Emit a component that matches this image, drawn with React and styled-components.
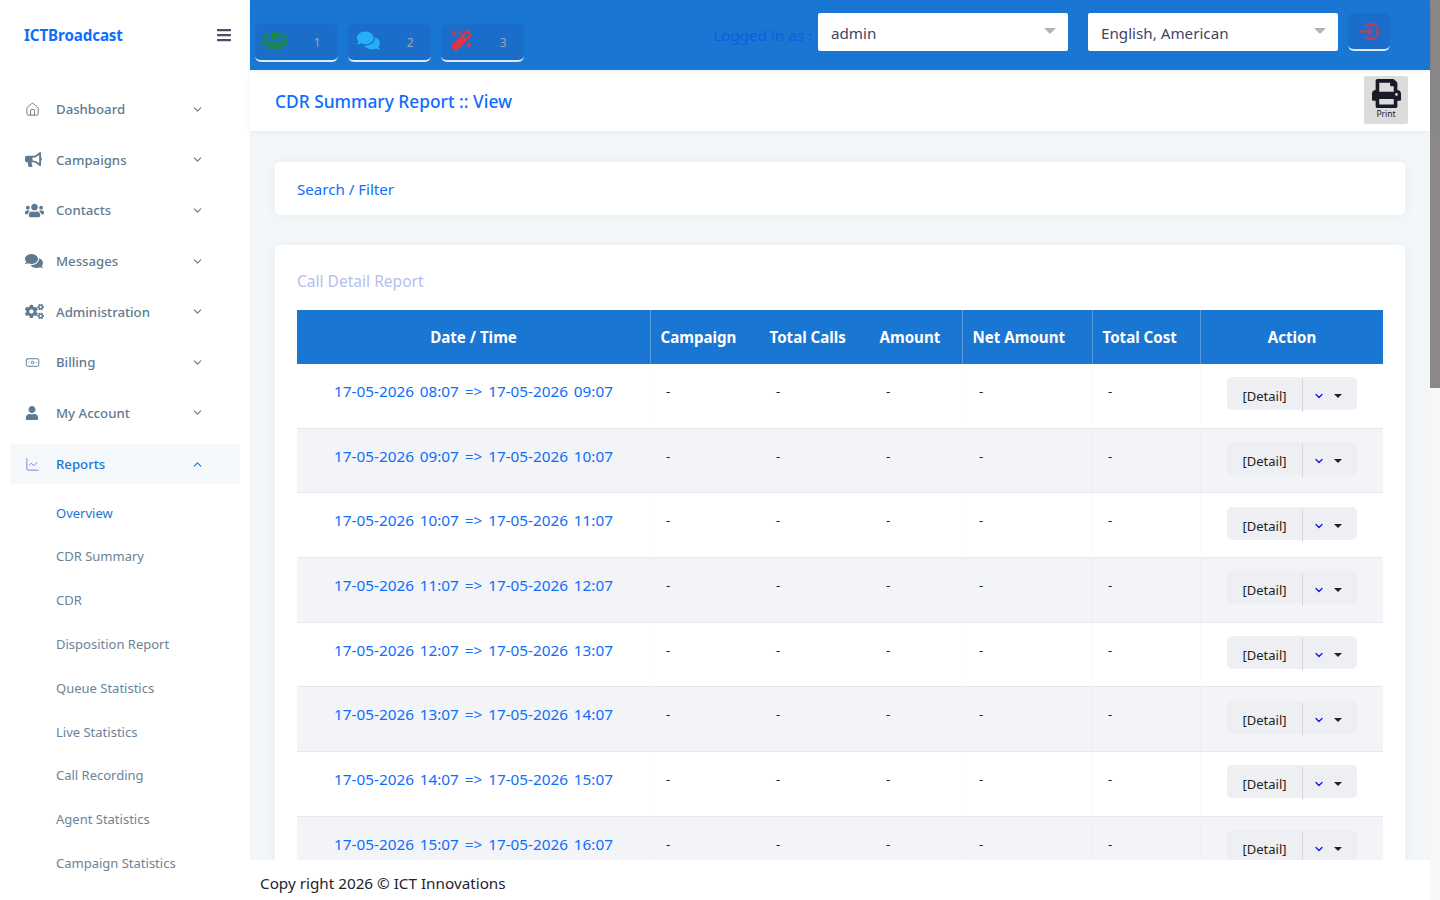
import React from 'react';
import styled, { createGlobalStyle } from 'styled-components';
import { FaBars, FaBullhorn, FaUsers, FaComments, FaCogs, FaUser, FaMagic, FaPrint } from 'react-icons/fa';
import { BiLogInCircle } from 'react-icons/bi';
import { Home, Banknote, LineChart, ChevronDown, ChevronUp } from 'lucide-react';

const Font = '"Noto Sans", "Open Sans", sans-serif';

const Global = createGlobalStyle`
  html, body { margin: 0; padding: 0; height: 100%; overflow: hidden; }
  body { font-family: ${Font}; background: #fff; }
  * { box-sizing: border-box; }
`;

const Page = styled.div`display: flex; width: 1440px; height: 900px; overflow: hidden;`;
const Sidebar = styled.aside`width: 250px; flex: none; background: #fff; padding: 0 10px; overflow: hidden;`;
const Brand = styled.div`display: flex; align-items: center; justify-content: space-between; height: 70px; padding: 0 8px 0 14px; color: #0d6efd; font-size: 15.15px; font-weight: 700; letter-spacing: -.1px; svg { color: #4a4f6a; font-size: 16px; }`;
const Nav = styled.nav`display: flex; flex-direction: column; gap: 10.05px; padding-top: 18.8px;`;
const NavItem = styled.div`display: flex; align-items: center; height: 40.6px; padding: 0 14px; border-radius: 4px; font-size: 13.2px; font-weight: 500; color: ${p => p.$active ? '#1976d2' : '#5f7a90'}; background: ${p => p.$active ? '#f4f8fb' : 'transparent'};`;
const NavIcon = styled.span`width: 32px; flex: none; display: flex; align-items: center; padding-left: 1px; color: ${p => p.$active ? '#7a6be0' : '#5f7a90'};`;
const NavLabel = styled.span`flex: 1;`;
const NavChevron = styled.span`display: flex; width: 18px; margin-right: 20px; justify-content: center;`;
const NavGroup = styled.div`margin-top: .5px;`;
const SubNav = styled.div`display: flex; flex-direction: column; padding-top: 7.3px;`;
const SubItem = styled.div`height: 43.8px; line-height: 43.8px; padding-left: 46px; font-size: 13px; color: ${p => p.$active ? '#1976d2' : '#6c8397'};`;

const Main = styled.div`flex: 1; min-width: 0; display: flex; flex-direction: column; background: #f3f7fa;`;
const Header = styled.header`height: 70px; flex: none; background: #1976d2; display: flex; align-items: center; padding: 0 40px 0 5px; box-shadow: 0 1px 4px rgba(0,0,0,.08); position: relative; z-index: 2;`;
const Quick = styled.div`display: flex; gap: 10px; margin-top: 16px;`;
const QuickBtn = styled.div`display: flex; width: 83px; height: 38px;`;
const QuickPart = styled.div`flex: 1; display: flex; align-items: center; justify-content: center; background: #1a6dc8; border-bottom: 2px solid #dfe9f5; color: #9aa7b8; font-size: 12px; padding-top: ${p => p.$num ? '1px' : '0'}; border-radius: ${p => p.$num ? '0 6px 6px 0' : '6px 0 0 6px'}; svg { color: ${p => p.$color}; font-size: ${p => p.$size || 21}px; margin-top: -4px; margin-left: -1px; }`;
const Right = styled.div`margin-left: auto; margin-top: -6px; display: flex; align-items: center;`;
const Logged = styled.span`font-size: 15.2px; color: #0d5fdc; margin-right: 6px; margin-top: 6px;`;
const Select = styled.div`width: 250px; height: 38px; margin-right: 20px; background: #fff; border-radius: 2px; display: flex; align-items: center; justify-content: space-between; padding: 1px 12px 0 13px; font-size: 15.2px; color: #3f4463;`;
const Caret = styled.span`width: 0; height: 0; border-left: 6px solid transparent; border-right: 6px solid transparent; border-top: 6px solid #adb5bd; margin-top: -4px;`;
const LogoutBtn = styled.div`width: 42px; height: 38px; margin-left: -10px; background: #1a6dc8; border-bottom: 2px solid #dfe9f5; border-radius: 6px; display: flex; align-items: center; justify-content: center; color: #dc3545; font-size: 23px;`;

const SubHeader = styled.div`height: 61px; flex: none; background: #fff; display: flex; align-items: center; justify-content: space-between; padding: 0 22px 0 25px; box-shadow: 0 1px 6px rgba(0,0,0,.06); position: relative; z-index: 1;`;
const PageTitle = styled.h1`margin: 0; font-size: 17.35px; font-weight: 500; color: #0d6efd;`;
const PrintBtn = styled.div`width: 44px; height: 48px; align-self: flex-start; margin-top: 6px; background: #dcdcdc; border-radius: 2px; display: flex; flex-direction: column; align-items: center; padding-top: 3px; color: #1a1a28; font-size: 8.5px; svg { font-size: 29px; margin-bottom: 0; }`;

const Content = styled.div`flex: 1; min-height: 0; overflow: hidden; padding: 31px 25px 0;`;
const Card = styled.section`background: #fff; border-radius: 5px; margin-bottom: 30px; padding: ${p => p.$pad}; box-shadow: 0 0 14px rgba(60,80,100,.06);`;
const SearchTitle = styled.div`font-size: 15.1px; height: 53px; line-height: 55px; color: #0d6efd;`;
const CardTitle = styled.div`font-size: 15.55px; line-height: 22px; color: #b3c0ea; margin-bottom: 18px;`;
const Table = styled.table`width: 1086px; table-layout: fixed; border-collapse: separate; border-spacing: 0;`;
const Th = styled.th`height: 54px; background: #1976d2; color: #fff; font-size: 15.1px; font-weight: 700; padding: 0 0 0 ${p => p.$left ? '9.5px' : '0'}; text-align: ${p => p.$left ? 'left' : 'center'}; border-left: ${p => p.$sep ? '1px solid rgba(255,255,255,.28)' : '0'}; white-space: nowrap;`;
const Tr = styled.tr`background: ${p => p.$even ? '#f2f4f8' : '#fff'};`;
const Td = styled.td`height: 64.67px; padding: 0 0 9.4px ${p => p.$pad || '0'}; border-bottom: 1px solid #e6e8ee; border-left: ${p => p.$sep ? '1px solid rgba(0,0,0,.018)' : '0'}; font-size: 13.2px; color: #222; text-align: ${p => p.$center ? 'center' : 'left'}; white-space: nowrap;`;
const DateLink = styled.span`font-size: 15.3px; word-spacing: 1.9px; color: #0d6efd;`;
const ActionCell = styled.td`height: 64.67px; padding: 0; border-bottom: 1px solid #e6e8ee; border-left: 1px solid rgba(0,0,0,.018);`;
const ActionGroup = styled.div`display: flex; width: 130px; height: 33px; margin: 0 0 4px 26px; border-radius: 5px; background: #eeeff3; font-size: 13px; color: #222;`;
const DetailBtn = styled.div`width: 75px; display: flex; align-items: center; justify-content: center; padding-top: 5px;`;
const Split = styled.span`width: 1px; height: 33px; flex: none; margin-top: 2px; background: #d6d7da;`;
const ToggleBtn = styled.div`flex: 1; display: flex; align-items: center; padding: 5px 0 0 10px; gap: 9px; color: #1414ee;`;
const ToggleCaret = styled.span`width: 0; height: 0; border-left: 4px solid transparent; border-right: 4px solid transparent; border-top: 4px solid #222;`;

const Footer = styled.footer`height: 40px; flex: none; background: #fff; padding: 6px 10px 0; display: flex; align-items: center; font-size: 15.25px; color: #1e2433; position: relative; z-index: 1;`;
const ScrollTrack = styled.div`width: 10px; flex: none; background: #f8f8f8;`;
const ScrollThumb = styled.div`height: 388px; background: #8a8889;`;

const navItems = [
  ['Dashboard', <Home size={15} strokeWidth={1.5} />],
  ['Campaigns', <FaBullhorn size={17} />],
  ['Contacts', <FaUsers size={19} />],
  ['Messages', <FaComments size={18} />],
  ['Administration', <FaCogs size={19} />],
  ['Billing', <Banknote size={15} strokeWidth={1.5} />],
  ['My Account', <FaUser size={14} />],
];
const subItems = ['Overview', 'CDR Summary', 'CDR', 'Disposition Report', 'Queue Statistics', 'Live Statistics', 'Call Recording', 'Agent Statistics', 'Campaign Statistics'];
const rows = ['08:07|09:07', '09:07|10:07', '10:07|11:07', '11:07|12:07', '12:07|13:07', '13:07|14:07', '14:07|15:07', '15:07|16:07'];

export default function App() {
  return (
    <Page>
      <Global />
      <Sidebar>
        <Brand>ICTBroadcast<FaBars /></Brand>
        <Nav>
          {navItems.map(([label, icon]) => (
            <NavItem key={label}>
              <NavIcon>{icon}</NavIcon>
              <NavLabel>{label}</NavLabel>
              <NavChevron><ChevronDown size={13} /></NavChevron>
            </NavItem>
          ))}
          <NavGroup>
            <NavItem $active>
              <NavIcon $active><LineChart size={15} strokeWidth={1.4} /></NavIcon>
              <NavLabel>Reports</NavLabel>
              <NavChevron><ChevronUp size={13} /></NavChevron>
            </NavItem>
            <SubNav>
              {subItems.map((s, i) => <SubItem key={s} $active={i === 0}>{s}</SubItem>)}
            </SubNav>
          </NavGroup>
        </Nav>
      </Sidebar>
      <Main>
        <Header>
          <Quick>
            <QuickBtn><QuickPart $color="#1b8556" $size={26}><FaUsers /></QuickPart><QuickPart $num>1</QuickPart></QuickBtn>
            <QuickBtn><QuickPart $color="#25b0f5" $size={23}><FaComments /></QuickPart><QuickPart $num>2</QuickPart></QuickBtn>
            <QuickBtn><QuickPart $color="#dc3545" $size={21}><FaMagic /></QuickPart><QuickPart $num>3</QuickPart></QuickBtn>
          </Quick>
          <Right>
            <Logged>Logged in as :</Logged>
            <Select>admin<Caret /></Select>
            <Select>English, American<Caret /></Select>
            <LogoutBtn><BiLogInCircle /></LogoutBtn>
          </Right>
        </Header>
        <SubHeader>
          <PageTitle>CDR Summary Report :: View</PageTitle>
          <PrintBtn><FaPrint />Print</PrintBtn>
        </SubHeader>
        <Content>
          <Card $pad="0 22px"><SearchTitle>Search / Filter</SearchTitle></Card>
          <Card $pad="25px 22px 0">
            <CardTitle>Call Detail Report</CardTitle>
            <Table>
              <colgroup>
                <col style={{ width: 353 }} /><col style={{ width: 110 }} /><col style={{ width: 110 }} /><col style={{ width: 92 }} /><col style={{ width: 130 }} /><col style={{ width: 108 }} /><col style={{ width: 183 }} />
              </colgroup>
              <thead>
                <tr>
                  <Th>Date / Time</Th><Th $left $sep>Campaign</Th><Th $left>Total Calls</Th><Th $left>Amount</Th><Th $left $sep>Net Amount</Th><Th $left $sep>Total Cost</Th><Th $sep>Action</Th>
                </tr>
              </thead>
              <tbody>
                {rows.map((r, i) => {
                  const [a, b] = r.split('|');
                  return (
                    <Tr key={r} $even={i % 2 === 1}>
                      <Td $center><DateLink>17-05-2026 {a} =&gt; 17-05-2026 {b}</DateLink></Td>
                      <Td $sep $pad="15px">-</Td><Td $pad="16px">-</Td><Td $pad="16px">-</Td><Td $sep $pad="16px">-</Td><Td $sep $pad="15px">-</Td>
                      <ActionCell>
                        <ActionGroup>
                          <DetailBtn>[Detail]</DetailBtn>
                          <Split />
                          <ToggleBtn><ChevronDown size={12} strokeWidth={2.6} /><ToggleCaret /></ToggleBtn>
                        </ActionGroup>
                      </ActionCell>
                    </Tr>
                  );
                })}
              </tbody>
            </Table>
          </Card>
        </Content>
        <Footer>Copy right 2026 © ICT Innovations</Footer>
      </Main>
      <ScrollTrack><ScrollThumb /></ScrollTrack>
    </Page>
  );
}
